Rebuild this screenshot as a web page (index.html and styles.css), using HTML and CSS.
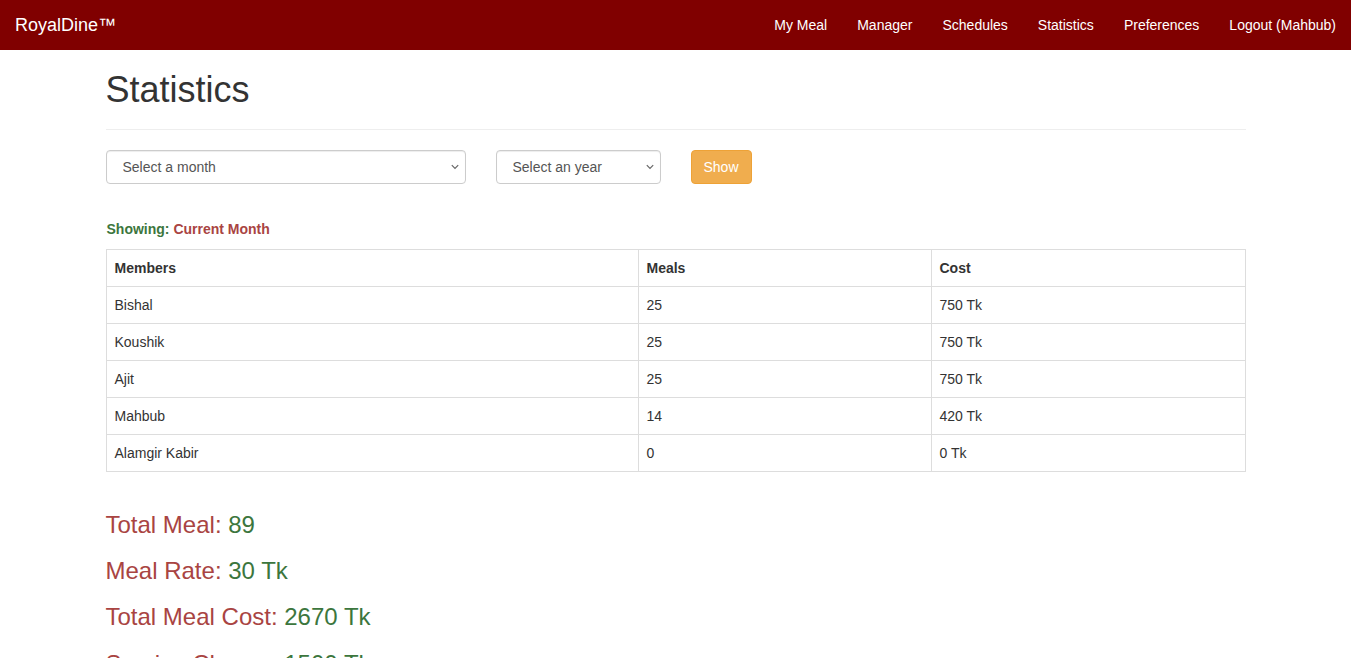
FILE: index.html
```html
<!DOCTYPE html>
<html lang="en">
<head>
<meta charset="utf-8">
<title>Statistics - RoyalDine</title>
<link rel="stylesheet" href="styles.css">
</head>
<body>
<nav class="navbar">
  <a class="brand" href="#">RoyalDine™</a>
  <ul class="nav">
    <li><a href="#">My Meal</a></li>
    <li><a href="#">Manager</a></li>
    <li><a href="#">Schedules</a></li>
    <li><a href="#">Statistics</a></li>
    <li><a href="#">Preferences</a></li>
    <li><a href="#">Logout (Mahbub)</a></li>
  </ul>
</nav>
<main class="container">
  <div class="page-header">
    <h1>Statistics</h1>
  </div>
  <form class="filters">
    <span class="select-wrap month">
      <select class="form-control"><option>Select a month</option></select>
      <svg class="chev" width="8" height="6" viewBox="0 0 8 6"><path d="M0.8 1.2 L4 4.4 L7.2 1.2" fill="none" stroke="#666" stroke-width="1.2"/></svg>
    </span>
    <span class="select-wrap year">
      <select class="form-control"><option>Select an year</option></select>
      <svg class="chev" width="8" height="6" viewBox="0 0 8 6"><path d="M0.8 1.2 L4 4.4 L7.2 1.2" fill="none" stroke="#666" stroke-width="1.2"/></svg>
    </span>
    <button type="button" class="btn-warning">Show</button>
  </form>
  <p class="showing"><span class="green">Showing:</span> <span class="red">Current Month</span></p>
  <table class="table">
    <thead>
      <tr><th class="c1">Members</th><th class="c2">Meals</th><th class="c3">Cost</th></tr>
    </thead>
    <tbody>
      <tr><td>Bishal</td><td>25</td><td>750 Tk</td></tr>
      <tr><td>Koushik</td><td>25</td><td>750 Tk</td></tr>
      <tr><td>Ajit</td><td>25</td><td>750 Tk</td></tr>
      <tr><td>Mahbub</td><td>14</td><td>420 Tk</td></tr>
      <tr><td>Alamgir Kabir</td><td>0</td><td>0 Tk</td></tr>
    </tbody>
  </table>
  <div class="summary">
    <h3 class="stat"><span class="red">Total Meal:</span> <span class="green">89</span></h3>
    <h3 class="stat"><span class="red">Meal Rate:</span> <span class="green">30 Tk</span></h3>
    <h3 class="stat"><span class="red">Total Meal Cost:</span> <span class="green">2670 Tk</span></h3>
    <h3 class="stat"><span class="red">Service Charge:</span> <span class="green">1500 Tk</span></h3>
  </div>
</main>
</body>
</html>
```
FILE: styles.css
```css
* { box-sizing: border-box; }
html, body { margin: 0; padding: 0; }
body {
  font-family: "Liberation Sans", Arial, Helvetica, sans-serif;
  font-size: 14px;
  line-height: 1.42857;
  color: #333;
  background: #fff;
}
.navbar {
  height: 50px;
  background: #800000;
  display: flex;
  align-items: center;
  justify-content: space-between;
}
.brand {
  color: #fff;
  text-decoration: none;
  font-size: 18px;
  line-height: 20px;
  padding: 15px 15px;
}
.nav {
  list-style: none;
  margin: 0;
  padding: 0;
  display: flex;
}
.nav a {
  display: block;
  color: #fff;
  text-decoration: none;
  padding: 15px 15px;
  line-height: 20px;
}
.container {
  width: 1170px;
  margin: 0 auto;
  padding: 0 15px;
}
.page-header {
  padding-bottom: 9px;
  border-bottom: 1px solid #eee;
  margin: 0 0 20px;
}
.page-header h1 {
  margin: 20px 0 10px;
  font-size: 36px;
  font-weight: 500;
  line-height: 1.1;
}
.filters {
  display: flex;
  align-items: center;
  margin: 0 0 35px;
}
.select-wrap {
  position: relative;
  display: block;
}
.select-wrap.month { width: 360px; margin-right: 30px; }
.select-wrap.year { width: 165px; margin-right: 30px; }
.form-control {
  -webkit-appearance: none;
  appearance: none;
  display: block;
  width: 100%;
  height: 34px;
  padding: 6px 12px 6px 16px;
  font-family: inherit;
  font-size: 14px;
  line-height: 20px;
  color: #555;
  background: #fff;
  border: 1px solid #ccc;
  border-radius: 4px;
  box-shadow: inset 0 1px 1px rgba(0,0,0,.075);
}
.chev {
  position: absolute;
  right: 7px;
  top: 14px;
  pointer-events: none;
}
.btn-warning {
  height: 34px;
  padding: 6px 12px;
  font-family: inherit;
  font-size: 14px;
  line-height: 20px;
  color: #fff;
  background: #f0ad4e;
  border: 1px solid #eea236;
  border-radius: 4px;
}
.showing {
  margin: 0 0 10px;
  font-weight: bold;
  font-size: 14px;
  line-height: 20px;
  padding-left: 1px;
}
.green { color: #3c763d; }
.red { color: #a94442; }
.table {
  width: 100%;
  border-collapse: collapse;
  margin-bottom: 20px;
  border: 1px solid #ddd;
}
.table th, .table td {
  padding: 8px;
  line-height: 20px;
  text-align: left;
  border: 1px solid #ddd;
  vertical-align: top;
}
.table th { font-weight: bold; }
.table .c1 { width: 532px; }
.table .c2 { width: 293px; }
.summary {
  margin-top: 40px;
}
.stat {
  font-size: 24px;
  font-weight: 500;
  line-height: 1.1;
  margin: 20px 0 10px;
}
```
